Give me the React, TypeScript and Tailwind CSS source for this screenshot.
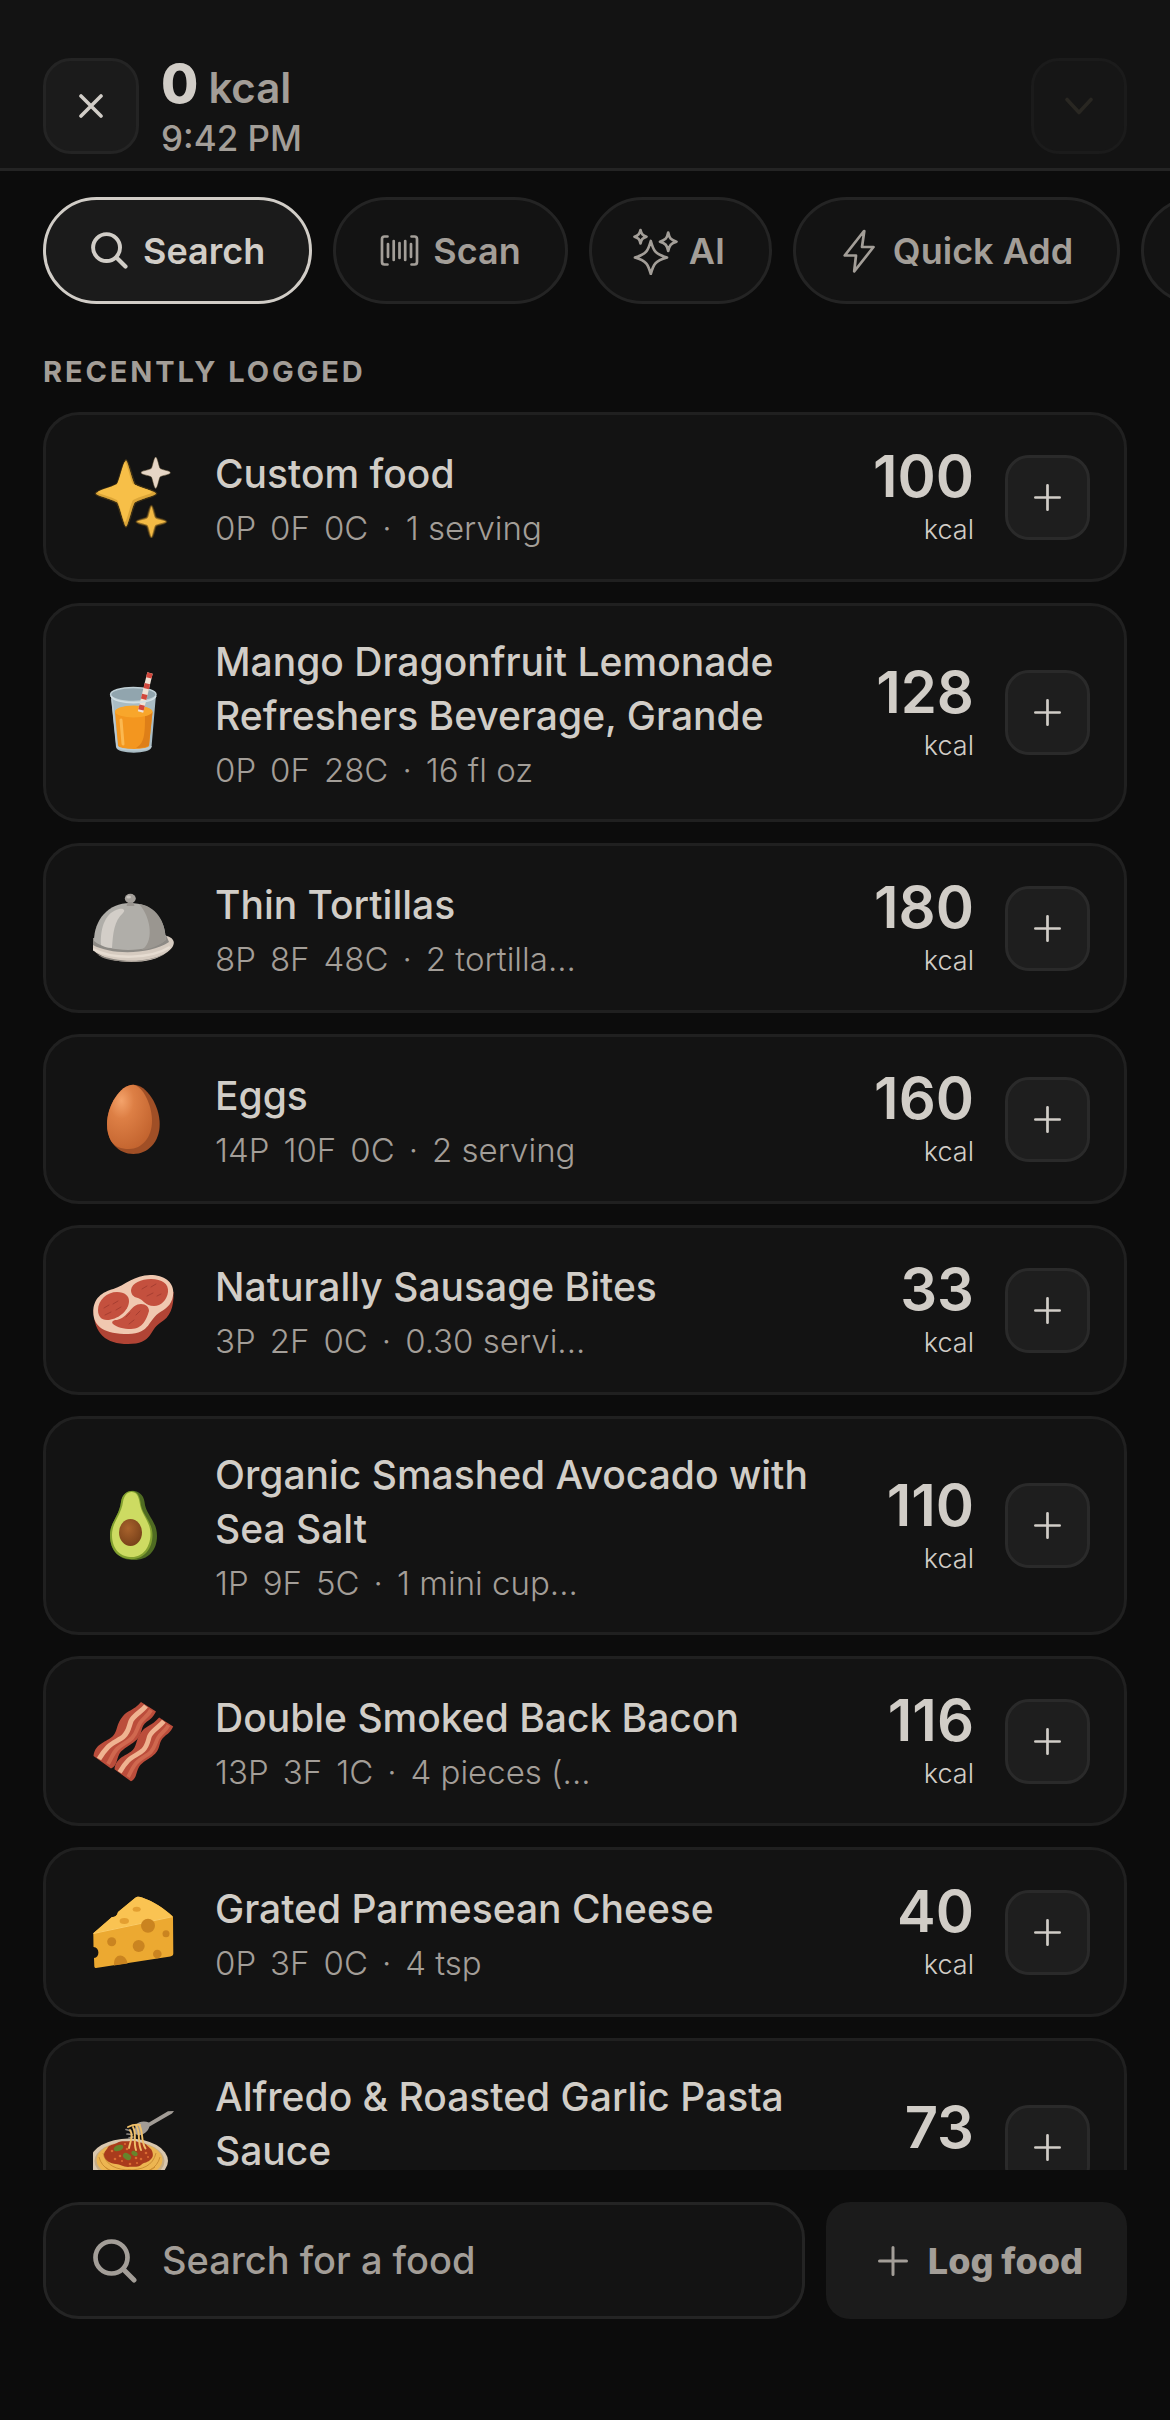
import { useState } from 'react';
import type { ReactNode } from 'react';
import { clsx } from 'clsx';

interface Food {
  id: string;
  name: string;
  macros: string[];
  serving: string;
  kcal: number;
  art: ReactNode;
}

// Four-point star centred on (cx, cy)
function starPath(cx: number, cy: number, rx: number, ry: number) {
  const a = 0.24;
  return `M${cx} ${cy - ry}C${cx + 2} ${cy - ry} ${cx + rx * a} ${cy - ry * a} ${cx + rx * 0.32} ${cy - ry * 0.26}C${cx + rx * 0.5} ${cy - ry * 0.16} ${cx + rx} ${cy - 2} ${cx + rx} ${cy}C${cx + rx} ${cy + 2} ${cx + rx * 0.5} ${cy + ry * 0.16} ${cx + rx * 0.32} ${cy + ry * 0.26}C${cx + rx * a} ${cy + ry * a} ${cx + 2} ${cy + ry} ${cx} ${cy + ry}C${cx - 2} ${cy + ry} ${cx - rx * a} ${cy + ry * a} ${cx - rx * 0.32} ${cy + ry * 0.26}C${cx - rx * 0.5} ${cy + ry * 0.16} ${cx - rx} ${cy + 2} ${cx - rx} ${cy}C${cx - rx} ${cy - 2} ${cx - rx * 0.5} ${cy - ry * 0.16} ${cx - rx * 0.32} ${cy - ry * 0.26}C${cx - rx * a} ${cy - ry * a} ${cx - 2} ${cy - ry} ${cx} ${cy - ry}Z`;
}

function Sparkles() {
  return (
    <>
      <path d={starPath(33, 36.5, 30, 33)} fill="#f3b93f" stroke="#5d4516" strokeOpacity="0.55" strokeWidth="3" />
      <path d={starPath(33, 36.5, 30, 33)} fill="#dca638" />
      <path d={starPath(32, 35, 27, 30)} fill="#f7bf48" />
      <path d={starPath(62.7, 15.7, 14.7, 15.7)} fill="#e6d6c6" stroke="#4b3d22" strokeOpacity="0.5" strokeWidth="1" />
      <path d={starPath(58.4, 64.7, 15, 16)} fill="#f3ba45" stroke="#5d4516" strokeOpacity="0.6" strokeWidth="2" />
    </>
  );
}

function Drink() {
  return (
    <>
      <path d="M17.7 22.5L23 75c.5 7.5 35 7.5 35.500 0L63 22.500Z" fill="#a9bcc4" />
      <ellipse cx="40.300" cy="22.500" rx="22.700" ry="7" fill="#91a5ae" stroke="#c0d0d6" strokeWidth="1.500" />
      <path d="M22 40l3 33.500c1 5 30 5 31 0L59.500 40c-3-8-34-8-37.500 0Z" fill="#f3961f" />
      <path d="M52 44c0 20-1 27-9 32 8 0 12-1 13-3l3.500-33Z" fill="#de7f18" />
      <ellipse cx="40.700" cy="39.500" rx="18.700" ry="6" fill="#f8a62b" />
      <path d="M28 48l2 24" stroke="#fbb850" strokeWidth="3" strokeLinecap="round" />
      <path d="M57 1L47.500 40" stroke="#efe2d5" strokeWidth="5.500" />
      <path d="M57 1L47.500 40" stroke="#d2473c" strokeWidth="5.500" strokeDasharray="5 6" />
      <path d="M18 24c4 9 41 9 45 0" fill="none" stroke="#d3e0e5" strokeWidth="1.500" />
      <path d="M19 27l5 47c1 5 33 5 34 0" fill="none" stroke="#bccbd2" strokeWidth="1.500" />
    </>
  );
}

function Cloche() {
  return (
    <>
      <path d="M0 50v12c16 16 58 15 73 3 5-3 9-8 7.500-12-1-3-5-5-8-5Z" fill="#d6cbc0" />
      <path d="M4 66c20 9 50 9 67 0-12 9-56 11-67 0Z" fill="#8b857e" />
      <path d="M0 50v7c18 10 56 10 76-3l-3-7Z" fill="#8d8a85" />
      <path d="M1 53C1 32 15 15 37 15s35.700 16 35.700 37c-14 12-56 14-71.700 1Z" fill="#b0aea9" />
      <path d="M46 16c13 14 15 40 2 46 10-1 20-5 24.700-10C72.500 32 62 18 46 16Z" fill="#9a9690" />
      <path d="M8 57c-1-18 5-33 18-36 4-1 7 1 4 4-9 8-10 20-11 35-4 0-8-1-11-3Z" fill="#d3cec8" />
      <path d="M0 61c20 11 58 10 77-2" fill="none" stroke="#e6dcd1" strokeWidth="2.500" />
      <ellipse cx="37.300" cy="10.500" rx="5.500" ry="4.700" fill="#a39f9a" />
      <ellipse cx="35.700" cy="9" rx="2.300" ry="1.500" fill="#c9c5bf" />
      <path d="M35 14h5l1.500 4h-8Z" fill="#98948f" />
    </>
  );
}

function Egg() {
  return (
    <>
      <defs>
        <radialGradient id="egg" cx="0.32" cy="0.25" r="0.8">
          <stop offset="0" stopColor="#f4a36b" />
          <stop offset="0.35" stopColor="#dd7f45" />
          <stop offset="1" stopColor="#c3642f" />
        </radialGradient>
      </defs>
      <path d="M40.300 5.700C54 5.700 66.700 27 66.700 45S55 75 40.300 75 14 63 14 45 27 5.700 40.300 5.700Z" fill="#a04f26" />
      <path d="M40.300 5.700C50 7 59 26 59 42S49 70 36 70c-8 0-14-2-18-8-2.500-4.500-4-10-4-17C14 27 27 5.700 40.300 5.700Z" fill="url(#egg)" />
    </>
  );
}

function Steak() {
  return (
    <>
      <path d="M.5 40C1 64 13 74 35 74c25 0 21-14 32-21 10-6 14-15 13.500-31Z" fill="#b14435" />
      <path d="M.3 42c0-14 9-20 20-23 12-4 21-14 37-14 14 0 23 7 23 17 0 11-6 16-13 20-12 7-10 22-32 22C12 64 .3 57 .3 42Z" fill="#f0c8b0" />
      <path d="M5 40c0-10 9-18 19-18 8 0 12 4 12 9 0 10-12 19-22 19-6 0-9-4-9-10Z" fill="#c4503e" />
      <path d="M38 20c1-7 10-11 20-11 11 0 18 5 17 13-1 8-7 14-14 14-9 0-10-6-16-8-5-1-7-4-7-8Z" fill="#c4503e" />
      <path d="M20 54c-2-2 0-4 4-4 12-3 14-16 24-16 5 0 8 3 8 7-2 7-6 18-18 18-7 0-15-2-18-5Z" fill="#c4503e" />
      <g fill="none" stroke="#a63e31" strokeWidth="1" strokeLinecap="round">
        <path d="M11 38l5-3M20 34l5-3M12 45l6-3M23 40l5-3M49 19l5-3M58 17l5-3M54 26l6-3M64 26l4-2M33 47l4-4M36 54l5-4M43 45l4-4" />
      </g>
    </>
  );
}

function Avocado() {
  return (
    <>
      <defs>
        <radialGradient id="pit" cx="0.4" cy="0.35" r="0.7">
          <stop offset="0" stopColor="#a8622c" />
          <stop offset="1" stopColor="#774019" />
        </radialGradient>
      </defs>
      <path d="M39.500 5.700c6 0 11 4 12 11 1 13 12.500 19 12.500 34S55 75 41 75 17 67 17 50c0-13 9-18 11-33 1-7 6-11.300 11.500-11.300Z" fill="#4f6b22" />
      <path d="M38.500 6c6 0 8 5 9 11 1 13 12 19 12 33S51 74 39 74 17 67 17 50c0-13 9-18 11-33 1-7 5-11 10.500-11Z" fill="#82a02f" />
      <path d="M38.500 7c5 0 7 4 8 10 2 14 11 19 11 32S50 72 39 72 19 65 19 50c0-13 9-19 11-33 1-6 4-10 8.500-10Z" fill="#cddb62" />
      <ellipse cx="37.500" cy="47.500" rx="11.500" ry="13.500" fill="url(#pit)" />
    </>
  );
}

function BaconStrip() {
  return (
    <>
      <path d="M48 1l15 9.500c-3 6-6 8-9 10-7 5-4 12-10 18-5 5-11 7-16 12-5 6-3 14-10 17L.5 55C2 42 14 41 20 35c5-6 3-12 10-20 5-6 10-5 18-14Z" fill="#bb4d3b" />
      <path d="M58 9c-3 6-8 8-11 13-3 5-3 10-8 15-4 4-10 6-15 11-4 4-6 10-9 15" fill="none" stroke="#d0684f" strokeWidth="4" />
      <path d="M53 5c-5 6-12 9-15 15-2 5-2 10-7 15-4 4-11 6-16 11-4 4-6 7-9 12" fill="none" stroke="#efb391" strokeWidth="5" />
    </>
  );
}

function Bacon() {
  return (
    <>
      <BaconStrip />
      <g transform="translate(21 15.500) scale(0.94 0.96)">
        <BaconStrip />
      </g>
    </>
  );
}

function Cheese() {
  return (
    <>
      <path d="M.3 41.300L19 25c3 0 5-1 6-5L42 6c2-2 5-1.500 7-.5 12 4 22 11 31 19l.3 37c0 1.500-1 2.500-3 3L3 76c-1 0-1.700-.5-1.700-2l-.3-8c6 0 6-11-.5-11Z" fill="#eca931" />
      <path d="M.3 41.300L19 25c3 0 5-1 6-5L42 6c2-2 5-1.500 7-.5 12 4 22 11 30.500 19Z" fill="#fac352" />
      <path d="M.5 41.500L79 24.800" stroke="#fbcc68" strokeWidth="1" />
      <g fill="#ca8420">
        <circle cx="18.700" cy="49.700" r="4.500" />
        <circle cx="45.700" cy="54" r="6" />
        <circle cx="55" cy="33.700" r="7" />
        <circle cx="73" cy="41.700" r="3.500" />
        <circle cx="64.300" cy="62" r="4.300" />
        <path d="M21 73.500c-1-13 12-13 13.500-2Z" />
      </g>
      <g fill="#e39f31">
        <ellipse cx="43.700" cy="17.300" rx="4" ry="2.500" />
        <ellipse cx="31.300" cy="29" rx="4.700" ry="3" />
      </g>
    </>
  );
}

function Spaghetti() {
  return (
    <>
      <ellipse cx="36" cy="54" rx="39" ry="22.500" fill="#d9c7ae" />
      <ellipse cx="36.500" cy="54" rx="35" ry="19.500" fill="#c7ad84" />
      <ellipse cx="36.500" cy="53" rx="33" ry="18" fill="#ecb551" />
      <g fill="none" stroke="#cb8d33" strokeWidth="1">
        <path d="M6 50c3 12 14 17 31 17M10 46c3 13 14 17 28 17M67 50c-3 12-14 17-30 17M63 46c-3 13-14 17-28 17M12 60c10 9 40 9 50 0" />
      </g>
      <path d="M11 48c0-4 3-5 4-8 3-3 6-2 9-4 5-3 9-1 13-2 6-1 8 2 13 2 4 1 5 4 8 6 2 3 3 8 0 10-3 4-7 3-10 6-4 3-9 1-13 2-5 0-8-3-12-3-5 0-12-4-12-9Z" fill="#a93b1c" />
      <g fill="#d96a31">
        <circle cx="19" cy="44" r="1.300" />
        <circle cx="27" cy="49" r="1.300" />
        <circle cx="22" cy="52" r="1.300" />
        <circle cx="29" cy="54" r="1.100" />
        <circle cx="37" cy="57" r="1.300" />
        <circle cx="44" cy="56" r="1.100" />
        <circle cx="48" cy="52" r="1.300" />
        <circle cx="53" cy="46" r="1.300" />
        <circle cx="55" cy="50" r="1.100" />
        <circle cx="34" cy="42" r="1.300" />
        <circle cx="32" cy="37" r="1.100" />
        <circle cx="43" cy="51" r="1.300" />
      </g>
      <g fill="#66852c">
        <ellipse cx="25.500" cy="41" rx="5" ry="3" transform="rotate(-20 25.500 41)" />
        <ellipse cx="34" cy="49.500" rx="4.500" ry="3" transform="rotate(35 34 49.500)" />
        <ellipse cx="41.500" cy="46.500" rx="3.300" ry="2.300" transform="rotate(30 41.500 46.500)" />
      </g>
      <path d="M81 4l-6 .3-19 11.200c-5-2-10-1-13 2l-2 9 5 2c5-1 9-4 10.500-9L79 6.500Z" fill="#a29c96" />
      <path d="M33 22.500l5 1.500M34 27l5 .5M36 31l4-1" stroke="#8f8a86" strokeWidth="1.700" strokeLinecap="round" />
      <g fill="none" stroke="#f0c06a" strokeWidth="1.900" strokeLinecap="round">
        <path d="M37 23c4 6 0 12-1 18M40 20c4 7 0 14 3 23M43 18.500c5 7 1 15 5 24.500M46.500 18.500c4 7 1 15 6 23M35 20c4-2 8-3 12-2" />
      </g>
    </>
  );
}

const RECENT_FOODS: Food[] = [
  { id: 'custom', name: 'Custom food', macros: ['0P', '0F', '0C'], serving: '1 serving', kcal: 100, art: <Sparkles /> },
  { id: 'mango', name: 'Mango Dragonfruit Lemonade Refreshers Beverage, Grande', macros: ['0P', '0F', '28C'], serving: '16 fl oz', kcal: 128, art: <Drink /> },
  { id: 'tortillas', name: 'Thin Tortillas', macros: ['8P', '8F', '48C'], serving: '2 tortilla...', kcal: 180, art: <Cloche /> },
  { id: 'eggs', name: 'Eggs', macros: ['14P', '10F', '0C'], serving: '2 serving', kcal: 160, art: <Egg /> },
  { id: 'sausage', name: 'Naturally Sausage Bites', macros: ['3P', '2F', '0C'], serving: '0.30 servi...', kcal: 33, art: <Steak /> },
  { id: 'avocado', name: 'Organic Smashed Avocado with Sea Salt', macros: ['1P', '9F', '5C'], serving: '1 mini cup...', kcal: 110, art: <Avocado /> },
  { id: 'bacon', name: 'Double Smoked Back Bacon', macros: ['13P', '3F', '1C'], serving: '4 pieces (...', kcal: 116, art: <Bacon /> },
  { id: 'cheese', name: 'Grated Parmesean Cheese', macros: ['0P', '3F', '0C'], serving: '4 tsp', kcal: 40, art: <Cheese /> },
  { id: 'alfredo', name: 'Alfredo & Roasted Garlic Pasta Sauce', macros: ['1P', '6F', '3C'], serving: '1 serving', kcal: 73, art: <Spaghetti /> },
];

function SearchIcon({ className }: { className?: string }) {
  return (
    <svg viewBox="0 0 44 44" fill="none" stroke="currentColor" strokeLinecap="round" className={className}>
      <circle cx="18.500" cy="18.500" r="16" strokeWidth="4.700" />
      <path d="M30.500 30.500L41 41" strokeWidth="5" />
    </svg>
  );
}

function BarcodeIcon() {
  return (
    <svg viewBox="0 0 39 48" fill="none" stroke="currentColor" strokeWidth="2.700" strokeLinecap="round" strokeLinejoin="round" className="w-[39px]">
      <path d="M7.500 9.500H4.500Q2 9.500 2 12V35Q2 37.500 4.500 37.500H7.500M31.500 9.500H34.500Q37 9.500 37 12V35Q37 37.500 34.500 37.500H31.500" />
      <path d="M8 17V30M13.700 14V33M19.500 16V31M25.200 14V33M31 17V30" />
    </svg>
  );
}

function AiIcon() {
  return (
    <svg viewBox="0 0 45 48" fill="none" stroke="currentColor" strokeWidth="2.700" strokeLinejoin="round" className="-mx-[3px] w-[45px]">
      <path d="M17.800 14C20.500 24 22 27 34 30.500 22 34 20.500 37 17.800 47 15 37 13.500 34 2 30.500 13.500 27 15 24 17.800 14Z" />
      <path d="M35.200 5.500C36.500 11.500 37.700 13 43.500 14.700 37.700 16.500 36.500 18 35.200 24 34 18 32.500 16.500 27 14.700 32.500 13 34 11.500 35.200 5.500Z" />
      <path d="M7.500 3C8.500 7.200 9.500 8.500 13.500 9.700 9.500 11 8.500 12.200 7.500 16.500 6.500 12.200 5.500 11 1.500 9.700 5.500 8.500 6.500 7.200 7.500 3Z" />
    </svg>
  );
}

function BoltIcon() {
  return (
    <svg viewBox="0 0 39 48" fill="none" stroke="currentColor" strokeWidth="2.700" strokeLinejoin="round" className="w-[39px]">
      <path d="M24 4L4.700 28.500H16L14.200 44.500L33.500 20H22L24.300 4Z" />
    </svg>
  );
}

function PlusIcon({ className }: { className?: string }) {
  return (
    <svg viewBox="0 0 30 30" fill="none" stroke="currentColor" strokeWidth="3" strokeLinecap="round" className={className}>
      <path d="M15 1.500V28.500M1.500 15H28.500" />
    </svg>
  );
}

const MODES = [
  { id: 'search', label: 'Search', icon: <SearchIcon className="mx-px w-[37px]" /> },
  { id: 'scan', label: 'Scan', icon: <BarcodeIcon /> },
  { id: 'ai', label: 'AI', icon: <AiIcon /> },
  { id: 'quick', label: 'Quick Add', icon: <BoltIcon /> },
];

function FoodRow({ food, onAdd }: { food: Food; onAdd: (kcal: number) => void }) {
  return (
    <li className="flex min-h-[170px] shrink-0 items-center rounded-[36px] border-3 border-[#202020] bg-[#131313] py-[25px] pr-[34px] pl-[47px]">
      <svg viewBox="0 0 81 81" className="w-[81px] shrink-0">
        {food.art}
      </svg>
      <div className="ml-[41px] min-w-0 flex-1 pt-1 pr-6">
        <h3 className="text-[39px] leading-[54px] font-medium text-[#d1cdc7]">{food.name}</h3>
        <p className="mt-1 flex gap-[14px] text-[33px] leading-[47px] font-light text-[#a39e98]">
          {food.macros.map((macro) => (
            <span key={macro}>{macro}</span>
          ))}
          <span>·</span>
          <span>{food.serving}</span>
        </p>
      </div>
      <div className="flex flex-col items-end pt-[3px] text-[#d1cdc7]">
        <span className="text-[58px] leading-[60px] font-semibold">{food.kcal}</span>
        <span className="mt-[3px] text-[27px] leading-[42px] font-light">kcal</span>
      </div>
      <button
        type="button"
        aria-label={`Add ${food.name}`}
        onClick={() => onAdd(food.kcal)}
        className="ml-[31px] flex size-[85px] shrink-0 items-center justify-center rounded-3xl border-3 border-[#2a2a2a] bg-[#1e1e1e] text-[#d1cdc7]"
      >
        <PlusIcon className="w-[27px]" />
      </button>
    </li>
  );
}

export default function App() {
  const [mode, setMode] = useState('search');
  const [total, setTotal] = useState(0);
  const [query, setQuery] = useState('');

  return (
    <div className="flex h-screen flex-col overflow-hidden bg-[#0c0c0c] font-['Inter',sans-serif] text-[#a39e98]">
      {/* Meal total */}
      <header className="flex shrink-0 items-start border-b-3 border-[#242424] bg-[#131313] px-[43px] pt-[58px] pb-[7px]">
        <button
          type="button"
          aria-label="Close"
          className="flex size-24 items-center justify-center rounded-[28px] border-3 border-[#242424] bg-[#1b1b1b] text-[#d1cdc7]"
        >
          <svg viewBox="0 0 24 24" fill="none" stroke="currentColor" strokeWidth="3.600" strokeLinecap="round" className="w-6">
            <path d="M2 2L22 22M22 2L2 22" />
          </svg>
        </button>
        <div className="ml-[22px] flex-1">
          <p className="flex items-baseline gap-[10px] text-[42px] leading-none font-semibold">
            <span className="text-[54px] leading-[52px] font-extrabold text-[#d1cdc7]">{total}</span>
            <span>kcal</span>
          </p>
          <p className="mt-[5px] text-[35px] leading-[46px] font-medium">9:42 PM</p>
        </div>
        <button
          type="button"
          aria-label="Expand"
          disabled
          className="flex size-24 items-center justify-center rounded-[28px] border-3 border-[#1b1b1b] bg-[#161616] text-[#292722]"
        >
          <svg viewBox="0 0 28 18" fill="none" stroke="currentColor" strokeWidth="3.600" strokeLinecap="round" strokeLinejoin="round" className="w-7">
            <path d="M2 2.500L14 15.500L26 2.500" />
          </svg>
        </button>
      </header>

      {/* Entry modes */}
      <nav className="flex shrink-0 gap-[21px] overflow-hidden px-[43px] pt-[26px]">
        {MODES.map((m) => (
          <button
            key={m.id}
            type="button"
            onClick={() => setMode(m.id)}
            className={clsx(
              'flex h-[107px] shrink-0 items-center gap-[14px] rounded-full border-3 px-11 text-[36px] font-semibold',
              mode === m.id ? 'border-[#d1cdc7] bg-[#1b1b1b] text-[#d1cdc7]' : 'border-[#242424] bg-[#131313]'
            )}
          >
            {m.icon}
            {m.label}
          </button>
        ))}
        <button type="button" aria-label="More" className="h-[107px] w-[240px] shrink-0 rounded-full border-3 border-[#242424] bg-[#131313]" />
      </nav>

      <main className="min-h-0 flex-1 overflow-hidden px-[43px] pt-12">
        <h2 className="text-[29px] leading-[40px] font-bold tracking-widest uppercase">Recently logged</h2>
        <ul className="mt-5 flex flex-col gap-[21px]">
          {RECENT_FOODS.map((food) => (
            <FoodRow key={food.id} food={food} onAdd={(kcal) => setTotal((prev) => prev + kcal)} />
          ))}
        </ul>
      </main>

      {/* Search bar */}
      <footer className="flex shrink-0 gap-[21px] px-[43px] pt-8 pb-[101px]">
        <label className="flex h-[117px] min-w-0 flex-1 items-center gap-[25px] rounded-[36px] border-3 border-[#242424] bg-[#131313] px-[47px]">
          <SearchIcon className="w-11 shrink-0" />
          <input
            type="text"
            aria-label="Search for a food"
            placeholder="Search for a food"
            value={query}
            onChange={(e) => setQuery(e.target.value)}
            className="min-w-0 flex-1 bg-transparent text-[38px] font-medium text-[#d1cdc7] outline-none placeholder:text-[#a39e98]"
          />
        </label>
        <button type="button" className="flex h-[117px] shrink-0 items-center gap-5 rounded-3xl bg-[#1b1b1b] pr-11 pl-[52px] text-[36px] font-extrabold">
          <PlusIcon className="w-[30px]" />
          Log food
        </button>
      </footer>
    </div>
  );
}
